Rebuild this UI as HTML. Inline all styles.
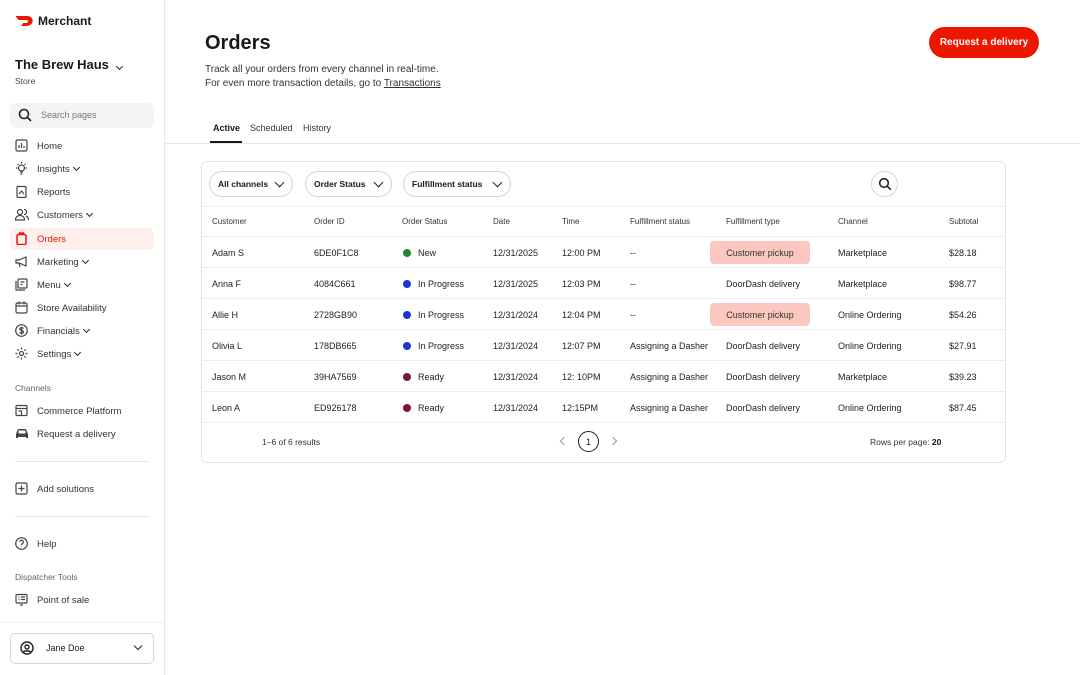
<!DOCTYPE html>
<html><head><meta charset="utf-8"><style>
*{box-sizing:border-box;margin:0;padding:0}
body{width:1080px;height:675px;position:relative;font-family:"Liberation Sans",sans-serif;color:#191919;background:#fff;overflow:hidden}
.a{position:absolute;white-space:nowrap}
.side{position:absolute;left:0;top:0;width:165px;height:675px;border-right:1px solid #e6e6e6}
.nav{position:absolute;left:10px;width:144px;height:22px;font-size:9.5px;color:#333;display:flex;align-items:center;padding-left:27px;border-radius:6px}
.nav svg{position:absolute;left:5px;top:4px}
.chev{display:inline-block;width:5px;height:5px;border-right:1.5px solid #222;border-bottom:1.5px solid #222;transform:rotate(45deg);margin:-3px 0 0 4px}
.f{font-size:9px;color:#222}
.h{font-size:8px;color:#333}
.pill{position:absolute;height:26px;border:1px solid #d6d6d6;border-radius:13px;font-size:8.5px;font-weight:bold;display:flex;align-items:center;justify-content:space-between;padding:0 9px 0 8px;white-space:nowrap}
.pill .chev{width:7px;height:7px;margin:-4px 0 0 6px;flex:none}
.dot{position:absolute;width:8px;height:8px;border-radius:50%}
.cp{position:absolute;left:710px;width:100px;height:23px;background:#fcc7bf;border-radius:4px;font-size:9px;color:#333;display:flex;align-items:center;justify-content:center}
.line{position:absolute;left:201px;width:804px;height:1px;background:#ececec}
.rows .f{margin-top:1px}
</style></head><body>
<div class="side">
<svg class="a" style="left:15px;top:15px" width="20" height="12" viewBox="0 0 20 12"><path d="M0.5 1h11.5c4 0 6.5 3 5.5 6-1 3-4 4-6.5 4H6l2.2-3H11.5c2 0 2-3 0-3H3.5z" fill="#eb1700"/></svg>
<div class="a" style="left:38px;top:14px;font-size:12px;font-weight:bold">Merchant</div>
<div class="a" style="left:15px;top:57px;font-size:13px;font-weight:bold">The Brew Haus <span class="chev" style="width:5px;height:5px"></span></div>
<div class="a" style="left:15px;top:76px;font-size:8.5px;color:#444">Store</div>
<div class="a" style="left:10px;top:103px;width:144px;height:25px;background:#f4f4f4;border-radius:6px"></div>
<svg class="a" style="left:18px;top:108px" width="14" height="14" viewBox="0 0 14 14"><circle cx="6" cy="6" r="4.5" fill="none" stroke="#222" stroke-width="1.6"/><path d="M9.5 9.5l3.5 3.5" stroke="#222" stroke-width="1.6"/></svg>
<div class="a" style="left:41px;top:110px;font-size:9px;color:#777">Search pages</div>
<div class="nav" style="top:135px"><svg width="13" height="13" viewBox="0 0 13 13" fill="none" stroke="#444" stroke-width="1.2"><rect x="1" y="1" width="11" height="11" rx="1.5"/><path d="M4 9V6M6.5 9V4M9 9V7"/></svg>Home</div>
<div class="nav" style="top:158px"><svg width="13" height="13" viewBox="0 0 13 13" fill="none" stroke="#444" stroke-width="1.2"><circle cx="6.5" cy="6" r="3"/><path d="M5 10h3M5.5 12h2M6.5 0v1.5M1 6h1.5M10.5 6H12M2.5 2l1 1M10.5 2l-1 1"/></svg>Insights<span class="chev"></span></div>
<div class="nav" style="top:181px"><svg width="13" height="13" viewBox="0 0 13 13" fill="none" stroke="#444" stroke-width="1.2"><rect x="2" y="1.5" width="9" height="11" rx="1"/><path d="M4 9l2.5-3 2.5 3"/></svg>Reports</div>
<div class="nav" style="top:204px"><svg width="14" height="13" viewBox="0 0 14 13" fill="none" stroke="#444" stroke-width="1.2"><circle cx="5" cy="4" r="2.5"/><path d="M0.5 12c0-3 2-4.5 4.5-4.5s4.5 1.5 4.5 4.5zM9 1.5a2.5 2.5 0 010 5M11 8c1.5.5 2.5 2 2.5 4"/></svg>Customers<span class="chev"></span></div>
<div class="nav" style="top:228px;background:#fff0ee;color:#eb1700"><svg width="13" height="13" viewBox="0 0 13 13" fill="none" stroke="#eb1700" stroke-width="1.5"><rect x="2" y="2.5" width="9" height="10" rx="1.5"/><path d="M4.5 2.5V1h4v1.5"/></svg>Orders</div>
<div class="nav" style="top:251px"><svg width="14" height="13" viewBox="0 0 14 13" fill="none" stroke="#444" stroke-width="1.2"><path d="M1 5h3l7-3v9L4 8H1zM4 8l1 4"/></svg>Marketing<span class="chev"></span></div>
<div class="nav" style="top:274px"><svg width="13" height="13" viewBox="0 0 13 13" fill="none" stroke="#444" stroke-width="1.2"><rect x="3" y="1" width="9" height="9" rx="1"/><path d="M1 3v9h9M5.5 4h4M5.5 6.5h2"/></svg>Menu<span class="chev"></span></div>
<div class="nav" style="top:297px"><svg width="13" height="13" viewBox="0 0 13 13" fill="none" stroke="#444" stroke-width="1.2"><rect x="1" y="2" width="11" height="10" rx="1.5"/><path d="M1 5h11M4 0.5v3M9 0.5v3"/></svg>Store Availability</div>
<div class="nav" style="top:320px"><svg width="13" height="13" viewBox="0 0 13 13" fill="none" stroke="#444" stroke-width="1.2"><circle cx="6.5" cy="6.5" r="5.8"/><path d="M8.5 4.5c-.5-1-3.5-1.3-3.8.3C4.4 6.5 8.8 6 8.5 8.2c-.3 1.5-3.5 1.3-4 .2M6.5 2.5v8"/></svg>Financials<span class="chev"></span></div>
<div class="nav" style="top:343px"><svg width="13" height="13" viewBox="0 0 13 13" fill="none" stroke="#444" stroke-width="1.2"><circle cx="6.5" cy="6.5" r="2"/><path d="M6.5 .5v2M6.5 10.5v2M.5 6.5h2M10.5 6.5h2M2.3 2.3l1.4 1.4M9.3 9.3l1.4 1.4M2.3 10.7l1.4-1.4M9.3 3.7l1.4-1.4"/></svg>Settings<span class="chev"></span></div>
<div class="a" style="left:15px;top:383px;font-size:8.5px;color:#666">Channels</div>
<div class="nav" style="top:400px"><svg width="13" height="13" viewBox="0 0 13 13" fill="none" stroke="#444" stroke-width="1.2"><rect x="1" y="1.5" width="11" height="10" rx="1"/><path d="M1 4.5h11M3.5 7h3v4.5"/></svg>Commerce Platform</div>
<div class="nav" style="top:423px"><svg width="14" height="13" viewBox="0 0 14 13"><path d="M3 2h8l2 5v4h-2v-1H3v1H1V7z" fill="#444"/><rect x="3.5" y="3.5" width="7" height="3" fill="#fff"/></svg>Request a delivery</div>
<div class="a" style="left:15px;top:461px;width:134px;height:1px;background:#e6e6e6"></div>
<div class="nav" style="top:478px"><svg width="13" height="13" viewBox="0 0 13 13" fill="none" stroke="#444" stroke-width="1.2"><rect x="1" y="1" width="11" height="11" rx="1.5"/><path d="M6.5 3.5v6M3.5 6.5h6"/></svg>Add solutions</div>
<div class="a" style="left:15px;top:516px;width:134px;height:1px;background:#e6e6e6"></div>
<div class="nav" style="top:533px"><svg width="13" height="13" viewBox="0 0 13 13" fill="none" stroke="#444" stroke-width="1.2"><circle cx="6.5" cy="6.5" r="5.8"/><path d="M4.8 5a1.8 1.8 0 113 1.3c-.8.5-1.3.8-1.3 1.7M6.5 9.5v.5"/></svg>Help</div>
<div class="a" style="left:15px;top:572px;font-size:8.5px;color:#666">Dispatcher Tools</div>
<div class="nav" style="top:589px"><svg width="13" height="13" viewBox="0 0 13 13" fill="none" stroke="#444" stroke-width="1.2"><rect x="1" y="1.5" width="11" height="8.5" rx="1"/><path d="M3.5 4h1M6 4h4M3.5 6.5h1M6 6.5h4M5 12h3"/></svg>Point of sale</div>
<div class="a" style="left:0;top:622px;width:164px;height:1px;background:#eee"></div>
<div class="a" style="left:10px;top:633px;width:144px;height:31px;border:1px solid #d6d6d6;border-radius:5px"></div>
<svg class="a" style="left:20px;top:641px" width="14" height="14" viewBox="0 0 14 14" fill="none" stroke="#222" stroke-width="1.4"><circle cx="7" cy="7" r="6"/><circle cx="7" cy="6" r="2"/><path d="M3.5 11c1-1.5 6-1.5 7 0"/></svg>
<div class="a" style="left:46px;top:643px;font-size:9px">Jane Doe</div>
<span class="a chev" style="left:131px;top:646px;width:6px;height:6px"></span>
</div>

<div class="a" style="left:205px;top:32px;font-size:20px;font-weight:bold">Orders</div>
<div class="a" style="left:205px;top:63px;font-size:10px;color:#333;line-height:14px">Track all your orders from every channel in real-time.<br>For even more transaction details, go to <u>Transactions</u></div>
<div class="a" style="left:929px;top:27px;width:110px;height:31px;background:#eb1700;border-radius:16px;color:#fff;font-size:10px;font-weight:bold;display:flex;align-items:center;justify-content:center">Request a delivery</div>
<div class="a" style="left:213px;top:123px;font-size:9px;font-weight:bold">Active</div>
<div class="a" style="left:210px;top:141px;width:32px;height:2px;background:#191919"></div>
<div class="a" style="left:250px;top:123px;font-size:9px;color:#333">Scheduled</div>
<div class="a" style="left:303px;top:123px;font-size:9px;color:#333">History</div>
<div class="a" style="left:165px;top:143px;width:915px;height:1px;background:#e6e6e6"></div>

<div class="a" style="left:201px;top:161px;width:805px;height:302px;border:1px solid #e4e4e4;border-radius:6px"></div>
<div class="pill" style="left:209px;top:171px;width:84px">All channels<span class="chev"></span></div>
<div class="pill" style="left:305px;top:171px;width:87px">Order Status<span class="chev"></span></div>
<div class="pill" style="left:403px;top:171px;width:108px">Fulfillment status<span class="chev"></span></div>
<div class="a" style="left:871px;top:171px;width:27px;height:26px;border:1px solid #d6d6d6;border-radius:50%"></div>
<svg class="a" style="left:878px;top:177px" width="14" height="14" viewBox="0 0 14 14"><circle cx="6" cy="6" r="4.3" fill="none" stroke="#222" stroke-width="1.6"/><path d="M9.3 9.3l3.5 3.5" stroke="#222" stroke-width="1.6"/></svg>
<div class="line" style="top:206px"></div>
<div class="h a" style="left:212px;top:217px">Customer</div><div class="h a" style="left:314px;top:217px">Order ID</div><div class="h a" style="left:402px;top:217px">Order Status</div><div class="h a" style="left:493px;top:217px">Date</div><div class="h a" style="left:562px;top:217px">Time</div><div class="h a" style="left:630px;top:217px">Fulfillment status</div><div class="h a" style="left:726px;top:217px">Fulfillment type</div><div class="h a" style="left:838px;top:217px">Channel</div><div class="h a" style="left:949px;top:217px">Subtotal</div>
<div class="line" style="top:236px"></div>

<div class="cp" style="top:241px">Customer pickup</div>
<div class="cp" style="top:303px">Customer pickup</div>
<div class="rows">
<div class="f a" style="left:212px;top:247px">Adam S</div><div class="f a" style="left:314px;top:247px">6DE0F1C8</div><div class="dot" style="left:403px;top:249px;background:#1a8a2e"></div><div class="f a" style="left:418px;top:247px">New</div><div class="f a" style="left:493px;top:247px">12/31/2025</div><div class="f a" style="left:562px;top:247px">12:00 PM</div><div class="f a" style="left:630px;top:247px">--</div><div class="f a" style="left:838px;top:247px">Marketplace</div><div class="f a" style="left:949px;top:247px">$28.18</div>
<div class="line" style="top:267px"></div>
<div class="f a" style="left:212px;top:278px">Anna F</div><div class="f a" style="left:314px;top:278px">4084C661</div><div class="dot" style="left:403px;top:280px;background:#1637d6"></div><div class="f a" style="left:418px;top:278px">In Progress</div><div class="f a" style="left:493px;top:278px">12/31/2025</div><div class="f a" style="left:562px;top:278px">12:03 PM</div><div class="f a" style="left:630px;top:278px">--</div><div class="f a" style="left:726px;top:278px">DoorDash delivery</div><div class="f a" style="left:838px;top:278px">Marketplace</div><div class="f a" style="left:949px;top:278px">$98.77</div>
<div class="line" style="top:298px"></div>
<div class="f a" style="left:212px;top:309px">Allie H</div><div class="f a" style="left:314px;top:309px">2728GB90</div><div class="dot" style="left:403px;top:311px;background:#1637d6"></div><div class="f a" style="left:418px;top:309px">In Progress</div><div class="f a" style="left:493px;top:309px">12/31/2024</div><div class="f a" style="left:562px;top:309px">12:04 PM</div><div class="f a" style="left:630px;top:309px">--</div><div class="f a" style="left:838px;top:309px">Online Ordering</div><div class="f a" style="left:949px;top:309px">$54.26</div>
<div class="line" style="top:329px"></div>
<div class="f a" style="left:212px;top:340px">Olivia L</div><div class="f a" style="left:314px;top:340px">178DB665</div><div class="dot" style="left:403px;top:342px;background:#1637d6"></div><div class="f a" style="left:418px;top:340px">In Progress</div><div class="f a" style="left:493px;top:340px">12/31/2024</div><div class="f a" style="left:562px;top:340px">12:07 PM</div><div class="f a" style="left:630px;top:340px">Assigning a Dasher</div><div class="f a" style="left:726px;top:340px">DoorDash delivery</div><div class="f a" style="left:838px;top:340px">Online Ordering</div><div class="f a" style="left:949px;top:340px">$27.91</div>
<div class="line" style="top:360px"></div>
<div class="f a" style="left:212px;top:371px">Jason M</div><div class="f a" style="left:314px;top:371px">39HA7569</div><div class="dot" style="left:403px;top:373px;background:#7a1540"></div><div class="f a" style="left:418px;top:371px">Ready</div><div class="f a" style="left:493px;top:371px">12/31/2024</div><div class="f a" style="left:562px;top:371px">12: 10PM</div><div class="f a" style="left:630px;top:371px">Assigning a Dasher</div><div class="f a" style="left:726px;top:371px">DoorDash delivery</div><div class="f a" style="left:838px;top:371px">Marketplace</div><div class="f a" style="left:949px;top:371px">$39.23</div>
<div class="line" style="top:391px"></div>
<div class="f a" style="left:212px;top:402px">Leon A</div><div class="f a" style="left:314px;top:402px">ED926178</div><div class="dot" style="left:403px;top:404px;background:#7a1540"></div><div class="f a" style="left:418px;top:402px">Ready</div><div class="f a" style="left:493px;top:402px">12/31/2024</div><div class="f a" style="left:562px;top:402px">12:15PM</div><div class="f a" style="left:630px;top:402px">Assigning a Dasher</div><div class="f a" style="left:726px;top:402px">DoorDash delivery</div><div class="f a" style="left:838px;top:402px">Online Ordering</div><div class="f a" style="left:949px;top:402px">$87.45</div>
</div>
<div class="line" style="top:422px"></div>

<div class="a" style="left:262px;top:437px;font-size:8.5px;color:#333">1–6 of 6 results</div>
<span class="a" style="left:561px;top:438px;width:6px;height:6px;border-left:1.3px solid #999;border-bottom:1.3px solid #999;transform:rotate(45deg)"></span>
<div class="a" style="left:578px;top:431px;width:21px;height:21px;border:1.3px solid #222;border-radius:50%;font-size:9px;display:flex;align-items:center;justify-content:center">1</div>
<span class="a" style="left:610px;top:438px;width:6px;height:6px;border-right:1.3px solid #999;border-top:1.3px solid #999;transform:rotate(45deg)"></span>
<div class="a" style="left:870px;top:437px;font-size:8.5px;color:#333">Rows per page: <b style="color:#111">20</b></div>
</body></html>
